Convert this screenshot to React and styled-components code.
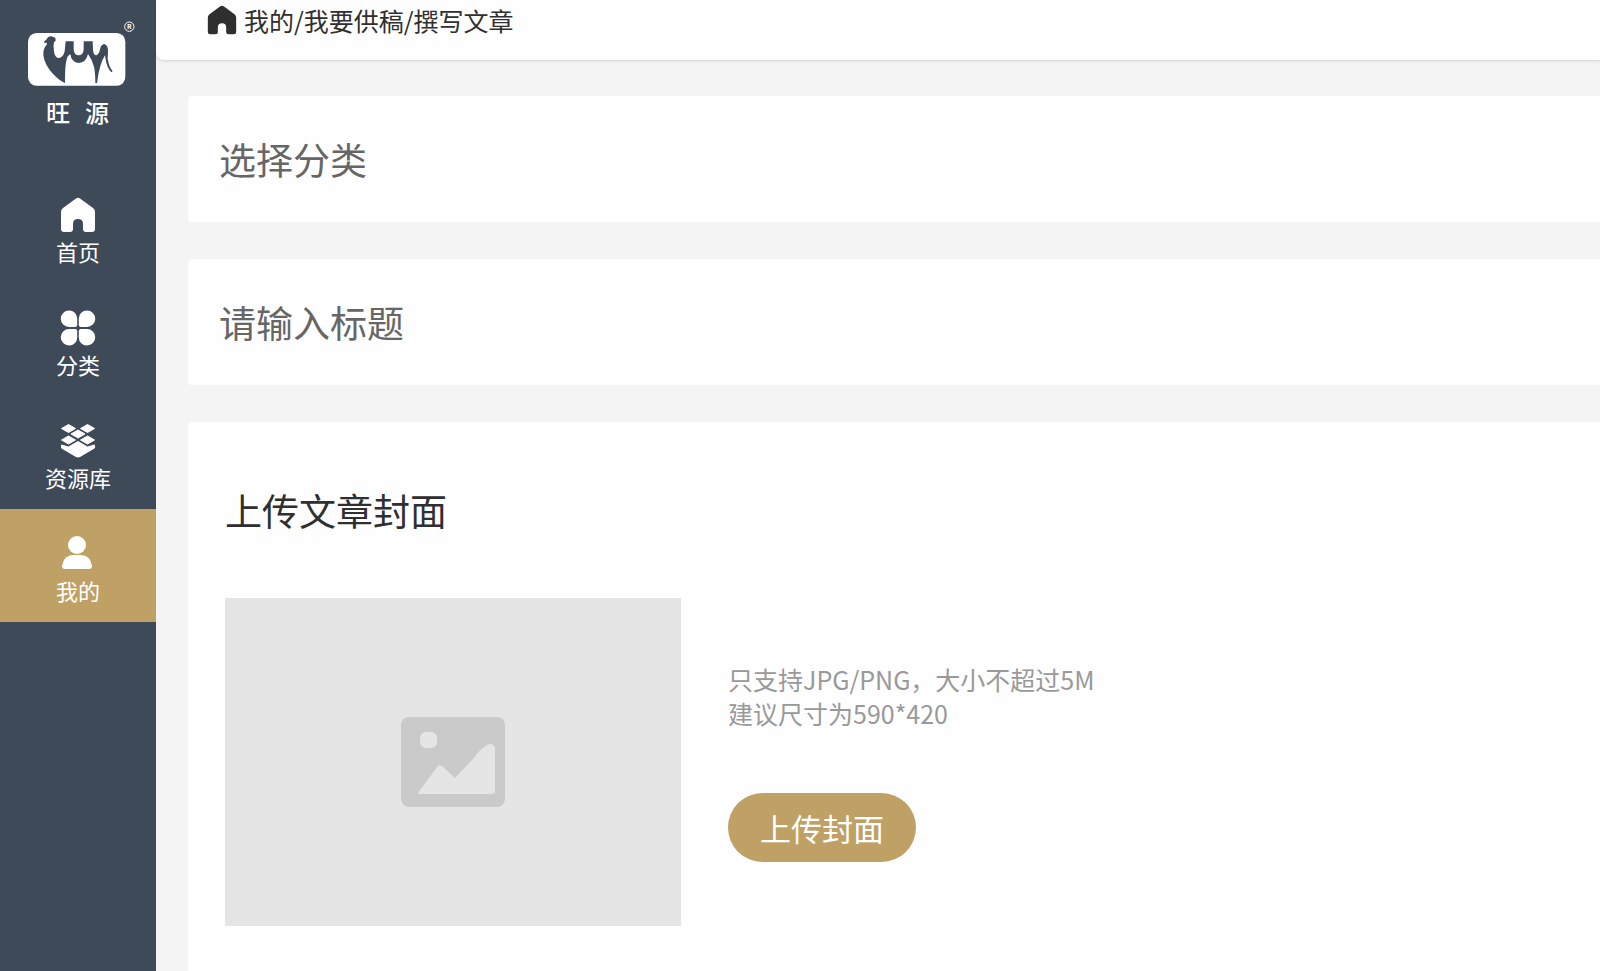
import React, { useState } from "react";
import styled, { createGlobalStyle } from "styled-components";

const GlobalStyle = createGlobalStyle`
  * {
    box-sizing: border-box;
  }

  body {
    margin: 0;
    background: #f4f4f4;
    font-family: "Noto Sans CJK SC", sans-serif;
    color: #2f2f2f;
  }

  button, input, select {
    font-family: inherit;
  }
`;

const navItems = [
  { key: "home", label: "首页", Icon: HomeIcon },
  { key: "category", label: "分类", Icon: CategoryIcon },
  { key: "library", label: "资源库", Icon: LibraryIcon },
  { key: "mine", label: "我的", Icon: UserIcon },
];

export default function App() {
  const [title, setTitle] = useState("");

  return (
    <StyledPage>
      <GlobalStyle />
      <StyledSidebar>
        <StyledBrand>
          <CamelLogo />
          <StyledBrandName>
            <span>旺</span>
            <span>源</span>
          </StyledBrandName>
        </StyledBrand>
        <nav>
          {navItems.map(({ key, label, Icon }) => (
            <StyledNavLink key={key} href={`#${key}`} $active={key === "mine"}>
              <Icon />
              {label}
            </StyledNavLink>
          ))}
        </nav>
      </StyledSidebar>

      <StyledMain>
        <StyledHeader>
          <HomeIcon size={30} />
          <span>我的/我要供稿/撰写文章</span>
        </StyledHeader>
        <StyledForm onSubmit={(event) => event.preventDefault()}>
          <StyledSelect aria-label="选择分类" defaultValue="">
            <option value="">选择分类</option>
          </StyledSelect>
          <StyledInput
            aria-label="请输入标题"
            placeholder="请输入标题"
            value={title}
            onChange={(event) => setTitle(event.target.value)}
          />
          <StyledCoverCard>
            <StyledCardTitle>上传文章封面</StyledCardTitle>
            <StyledCoverRow>
              <StyledPreview>
                <PictureIcon />
              </StyledPreview>
              <div>
                <StyledHint>
                  只支持JPG/PNG，大小不超过5M
                  <br />
                  建议尺寸为590*420
                </StyledHint>
                <StyledUploadButton type="button">上传封面</StyledUploadButton>
              </div>
            </StyledCoverRow>
          </StyledCoverCard>
        </StyledForm>
      </StyledMain>
    </StyledPage>
  );
}

function CamelLogo() {
  return (
    <svg width="108" height="66" viewBox="0 0 324 198" aria-hidden="true">
      <rect x="0" y="39" width="292" height="158" rx="26" fill="#fff" />
      <path
        fill="#3f4a59"
        d="M49 64 L56 58 Q60 48 70 49 L82 53 L83 62 L78 67 Q75 78 78 94 Q80 113 92 114 Q106 113 110 94 L113 64 H137 V88 Q138 106 152 106 Q166 106 167 88 V64 H194 L195 88 Q196 106 205 106 Q213 103 216 88 Q219 73 229 72 Q240 76 240 92 L239 116 Q242 138 254 154 L250 157 Q236 142 233 118 L231 106 Q222 120 217 138 Q210 162 207 189 H202 Q202 158 198 140 Q193 120 180 102 Q174 128 152 129 Q130 127 127 103 Q117 106 114 128 Q111 142 111 189 Q96 184 76 163 Q50 136 46 106 Q45 84 56 74 L57 68 L49 69 Z"
      />
      <circle cx="304" cy="20" r="14" fill="none" stroke="#fff" strokeWidth="3" />
      <text x="304" y="27" fill="#fff" fontSize="20" fontWeight="bold" textAnchor="middle">
        R
      </text>
    </svg>
  );
}

function HomeIcon({ size = 36 }) {
  return (
    <svg width={size} height={size} viewBox="0 0 36 36" fill="currentColor" aria-hidden="true">
      <path d="M16 1.500 Q18 0 20 1.500 L33 11 Q35 12.500 35 15 V32 Q35 35 32 35 H26 Q23 35 23 32 V27 Q23 22 18 22 Q13 22 13 27 V32 Q13 35 10 35 H4 Q1 35 1 32 V15 Q1 12.500 3 11 Z" />
    </svg>
  );
}

function CategoryIcon() {
  return (
    <svg width="36" height="36" viewBox="0 0 36 36" fill="currentColor" aria-hidden="true">
      <path d="M9 .5 A8 8 0 0 1 17.200 8.500 V15 Q17.200 17 15.200 17 H9 A8.250 8.250 0 0 1 9 .5 Z" />
      <path d="M27 .5 A8.250 8.250 0 0 1 27 17 H20.800 Q18.800 17 18.800 15 V8.500 A8 8 0 0 1 27 .5 Z" />
      <path d="M9 35.500 A8 8 0 0 0 17.200 27.500 V21 Q17.200 19 15.200 19 H9 A8.250 8.250 0 0 0 9 35.500 Z" />
      <path d="M27 35.500 A8.250 8.250 0 0 0 27 19 H20.800 Q18.800 19 18.800 21 V27.500 A8 8 0 0 0 27 35.500 Z" />
    </svg>
  );
}

function LibraryIcon() {
  return (
    <svg
      width="36"
      height="36"
      viewBox="0 0 36 36"
      fill="currentColor"
      stroke="currentColor"
      strokeLinejoin="round"
      aria-hidden="true"
    >
      <path d="M1.500 5.500 L8.500 1.500 L15.500 5.500 L8.500 9.500 Z" />
      <path d="M34.500 5.500 L27.500 1.500 L20.500 5.500 L27.500 9.500 Z" />
      <path d="M11 11 L18 7 L25 11 L18 15 Z" />
      <path d="M1.500 17 L8.500 13 L15.500 17 L8.500 21 Z" />
      <path d="M34.500 17 L27.500 13 L20.500 17 L27.500 21 Z" />
      <path d="M1.500 22 L8.500 24 L18 18.500 L27.500 24 L34.500 22 V25 L20 33.500 Q18 34.500 16 33.500 L1.500 25 Z" />
    </svg>
  );
}

function UserIcon() {
  return (
    <svg width="36" height="36" viewBox="0 0 36 36" fill="currentColor" aria-hidden="true">
      <circle cx="17" cy="9" r="9" />
      <path d="M2 30 Q4 19 13 19 H21 Q30 19 32 30 Q32 33 29 33 H5 Q2 33 2 30 Z" />
    </svg>
  );
}

function PictureIcon() {
  return (
    <svg width="104" height="90" viewBox="0 0 104 90" aria-hidden="true">
      <rect width="104" height="90" rx="8" fill="#cacaca" />
      <rect x="19" y="15" width="17" height="16" rx="6" fill="#e5e5e5" />
      <path
        d="M17 76 L36 50 Q38 47 41 49 L54 61 L72 42 Q78 33 86 28 Q93 25 94 31 V74 Q94 77 91 77 H19 Q16 78 17 76 Z"
        fill="#e5e5e5"
      />
    </svg>
  );
}

const StyledPage = styled.div`
  display: flex;
  min-height: 100vh;
`;

const StyledSidebar = styled.aside`
  flex: 0 0 156px;
  background: #3f4a59;
  color: #fff;
`;

const StyledBrand = styled.div`
  display: flex;
  flex-direction: column;
  gap: 8px;
  height: 170px;
  padding: 20px 20px 0 28px;
`;

const StyledBrandName = styled.div`
  display: flex;
  gap: 15px;
  padding-left: 18px;
  font-size: 24px;
  font-weight: 500;
  line-height: 36px;
`;

const StyledNavLink = styled.a`
  display: flex;
  flex-direction: column;
  align-items: center;
  gap: 2px;
  height: 113px;
  padding-top: 27px;
  background: ${({ $active }) => ($active ? "#bfa065" : "transparent")};
  color: #fff;
  font-size: 22px;
  line-height: 32px;
  text-decoration: none;
`;

const StyledMain = styled.main`
  flex: 1;
  min-width: 0;
`;

const StyledHeader = styled.header`
  display: flex;
  align-items: center;
  gap: 7px;
  height: 60px;
  padding: 0 51px 20px;
  border-bottom-left-radius: 8px;
  background: #fefefe;
  box-shadow: 0 1px 3px rgba(0, 0, 0, 0.15);
  font-size: 25px;
`;

const StyledForm = styled.form`
  display: flex;
  flex-direction: column;
  gap: 37px;
  padding: 36px 0 0 32px;
`;

const StyledSelect = styled.select`
  appearance: none;
  width: 100%;
  height: 126px;
  padding: 0 31px;
  border: 0;
  border-radius: 4px 0 0 4px;
  background: #fefefe;
  color: #666;
  font-size: 37px;
`;

const StyledInput = styled.input`
  width: 100%;
  height: 126px;
  padding: 0 31px;
  border: 0;
  border-radius: 4px 0 0 4px;
  background: #fefefe;
  color: #666;
  font-size: 37px;

  &::placeholder {
    color: #666;
    opacity: 1;
  }
`;

const StyledCoverCard = styled.section`
  padding: 60px 37px 45px;
  border-radius: 4px 0 0 0;
  background: #fefefe;
`;

const StyledCardTitle = styled.h2`
  margin: 0 0 60px;
  font-size: 37px;
  font-weight: 400;
  line-height: 56px;
`;

const StyledCoverRow = styled.div`
  display: flex;
  align-items: center;
  gap: 47px;
`;

const StyledPreview = styled.div`
  display: flex;
  align-items: center;
  justify-content: center;
  width: 456px;
  height: 328px;
  background: #e5e5e5;
`;

const StyledHint = styled.p`
  margin: 0 0 63px;
  color: #999;
  font-size: 25px;
  line-height: 34px;
`;

const StyledUploadButton = styled.button`
  width: 188px;
  height: 69px;
  padding: 0;
  border: 0;
  border-radius: 35px;
  background: #bfa065;
  color: #fff;
  font-size: 31px;
`;
